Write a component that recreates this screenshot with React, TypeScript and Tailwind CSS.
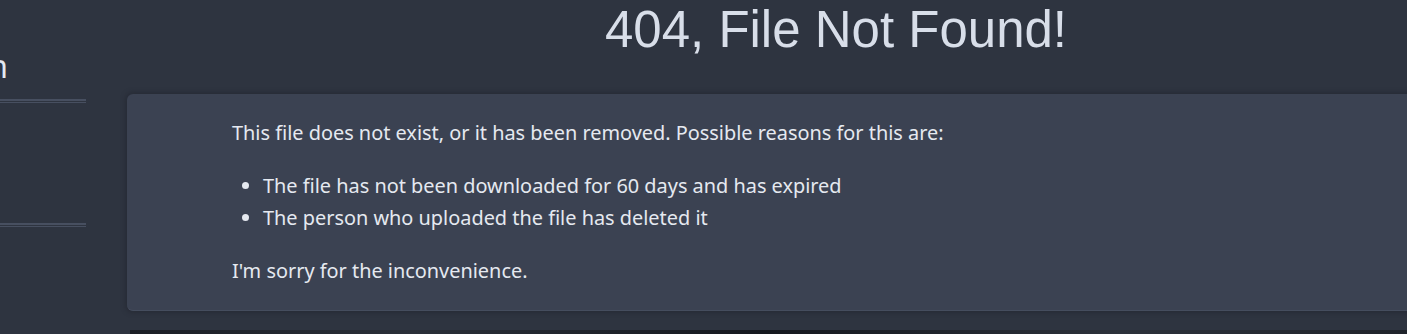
const reasons = [
  "The file has not been downloaded for 60 days and has expired",
  "The person who uploaded the file has deleted it",
];

const App = () => {
  return (
    <div className="flex h-[334px] w-[1407px] overflow-hidden bg-[#2e3440] text-[#d8dee9]">
      <aside className="w-[86px] shrink-0 pt-[46px]">
        <div className="flex h-[40px] w-[8px] justify-end whitespace-nowrap font-['Noto_Sans',sans-serif] text-[32px] leading-[40px] text-[#e5e9f0]">
          Navigation
        </div>
        <div className="mt-[13px] h-[4px] border-t-2 border-b border-[#474f60]" />
        <div className="mt-[120px] h-[4px] border-t-2 border-b border-[#474f60]" />
      </aside>
      <main className="ml-[41px] w-[1418px] shrink-0">
        <h1 className="h-[60px] text-center font-['Liberation_Sans',Arial,sans-serif] text-[51px] leading-[60px] text-[#d8dee9]">
          404, File Not Found!
        </h1>
        <div className="mt-[34px] rounded-md border-b border-[#454d5e] bg-[#3b4252] py-[23px] pl-[105px] font-['Noto_Sans',sans-serif] text-[19.9px] leading-[32px] text-[#e5e9f0] shadow-[0_0_4px_2px_rgba(35,39,48,0.6)]">
          <p>This file does not exist, or it has been removed. Possible reasons for this are:</p>
          <ul className="my-[21px] list-disc pl-[31px]">
            {reasons.map((r) => (
              <li key={r}>{r}</li>
            ))}
          </ul>
          <p>I'm sorry for the inconvenience.</p>
        </div>
        <div className="ml-[3px] mt-[19px] h-[20px] bg-[linear-gradient(90deg,#1b1e25,#2a2f38_20%,#15181e_45%,#2c313a_70%,#1a1d23)]" />
      </main>
    </div>
  );
};

export default App;
